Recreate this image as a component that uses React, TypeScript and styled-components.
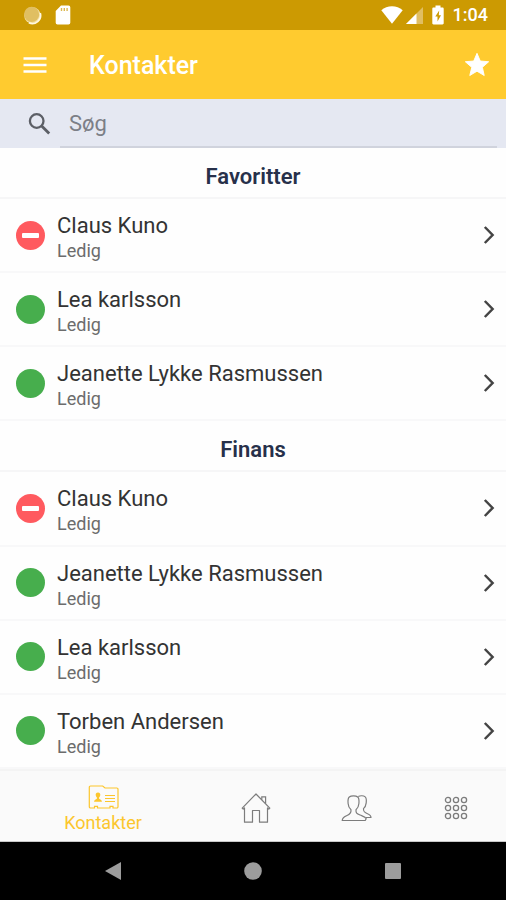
import React from "react";
import styled, { createGlobalStyle } from "styled-components";

const GlobalStyle = createGlobalStyle`
  *, *::before, *::after { box-sizing: border-box; }
  body {
    margin: 0;
    background: #fff;
    font-family: Roboto, sans-serif;
    color: #212121;
  }
  button, input { font-family: inherit; }
  svg { display: block; }
`;

const Screen = styled.div`
  display: flex;
  flex-direction: column;
  min-height: 100vh;
  background: #fefefe;
`;

const StatusBar = styled.div`
  display: flex;
  align-items: center;
  justify-content: space-between;
  height: 30px;
  padding: 0 18px 0 22px;
  background: #cc9a02;
  color: #fff;
`;

const StatusGroup = styled.div<{ $gap: number }>`
  display: flex;
  align-items: center;
  gap: ${(p) => p.$gap}px;
`;

const Clock = styled.time`
  font-size: 18px;
  line-height: 30px;
  font-weight: 500;
`;

const AppBar = styled.header`
  display: flex;
  align-items: center;
  height: 69px;
  padding: 0 12px 0 18px;
  background: #ffcb2f;
  color: #fff;
`;

const IconButton = styled.button`
  display: flex;
  align-items: center;
  justify-content: center;
  width: 34px;
  height: 34px;
  padding: 0;
  border: 0;
  background: none;
  color: inherit;
  cursor: pointer;
`;

const Title = styled.h1`
  flex: 1;
  margin: 0;
  padding: 2px 0 0 37px;
  font-size: 25px;
  line-height: 32px;
  font-weight: 500;
`;

const SearchBar = styled.label`
  display: flex;
  align-items: stretch;
  height: 49px;
  padding: 0 9px 0 27px;
  background: #e5e8f2;
  color: #5c5f66;
`;

const SearchIcon = styled.span`
  display: flex;
  align-items: center;
  width: 33px;
`;

const SearchInput = styled.input`
  flex: 1;
  min-width: 0;
  padding: 2px 9px 0;
  border: 0;
  border-bottom: 2px solid #d0d3dd;
  outline: 0;
  background: none;
  color: #212121;
  font-size: 22px;
  &::placeholder { color: #7c7f87; opacity: 1; }
`;

const Contacts = styled.main`
  display: flex;
  flex: 1;
  flex-direction: column;
`;

const Group = styled.section`
  display: contents;
`;

const GroupTitle = styled.h2`
  margin: 0;
  padding: 15px 16px 7px;
  border-bottom: 2px solid #f6f6f7;
  color: #27304a;
  font-size: 22px;
  line-height: 27px;
  font-weight: 600;
  text-align: center;
`;

const List = styled.ul`
  display: contents;
  list-style: none;
`;

const Item = styled.li`
  display: flex;
  flex: 1 0 auto;
  min-height: 74px;
  border-bottom: 2px solid #f8f8f9;
`;

const Row = styled.button`
  display: flex;
  flex: 1;
  align-items: center;
  min-width: 0;
  padding: 0 10px 0 16px;
  border: 0;
  background: none;
  color: #444;
  text-align: left;
  cursor: pointer;
`;

const Presence = styled.span<{ $busy: boolean }>`
  display: flex;
  flex: none;
  align-items: center;
  justify-content: center;
  width: 29px;
  height: 29px;
  border-radius: 50%;
  background: ${(p) => (p.$busy ? "#ff5a5f" : "#47ae4d")};
  &::before {
    content: "";
    display: ${(p) => (p.$busy ? "block" : "none")};
    width: 17px;
    height: 5px;
    border-radius: 1px;
    background: #fff;
  }
`;

const Person = styled.span`
  display: flex;
  flex: 1;
  flex-direction: column;
  min-width: 0;
  padding: 5px 0 0 12px;
`;

const Name = styled.span`
  color: #333;
  font-size: 22px;
  line-height: 27px;
`;

const State = styled.span`
  color: #6c6c6c;
  font-size: 18px;
  line-height: 24px;
`;

const TabBar = styled.nav`
  display: flex;
  height: 73px;
  border-top: 2px solid #f4f4f4;
  border-bottom: 1px solid #c8c8c8;
  background: #fafafa;
`;

const Tab = styled.button<{ $active?: boolean }>`
  display: flex;
  flex: ${(p) => (p.$active ? "1" : "0 0 100px")};
  flex-direction: column;
  align-items: center;
  justify-content: center;
  gap: 2px;
  min-width: 0;
  padding: ${(p) => (p.$active ? "8px" : "3px")} 0 0;
  border: 0;
  background: none;
  color: ${(p) => (p.$active ? "#fcc62d" : "#7c7c7c")};
  font-size: 18px;
  line-height: 24px;
  cursor: pointer;
`;

const SystemBar = styled.div`
  display: flex;
  justify-content: center;
  height: 58px;
  background: #000;
  color: #9c9c9c;
`;

const SystemButton = styled.button`
  display: flex;
  flex: 0 1 140px;
  align-items: center;
  justify-content: center;
  padding: 0;
  border: 0;
  background: none;
  color: inherit;
  cursor: pointer;
`;

type Contact = { name: string; state: string; busy?: boolean };

const groups: { title: string; contacts: Contact[] }[] = [
  {
    title: "Favoritter",
    contacts: [
      { name: "Claus Kuno", state: "Ledig", busy: true },
      { name: "Lea karlsson", state: "Ledig" },
      { name: "Jeanette Lykke Rasmussen", state: "Ledig" },
    ],
  },
  {
    title: "Finans",
    contacts: [
      { name: "Claus Kuno", state: "Ledig", busy: true },
      { name: "Jeanette Lykke Rasmussen", state: "Ledig" },
      { name: "Lea karlsson", state: "Ledig" },
      { name: "Torben Andersen", state: "Ledig" },
    ],
  },
];

const SyncIcon = () => (
  <svg width="20" height="20" viewBox="0 0 20 20" aria-hidden="true">
    <circle cx="10.5" cy="10.5" r="8.3" fill="#f3dfa3" />
    <circle cx="9.6" cy="9.4" r="7.6" fill="#e0bf62" />
    <path d="M18.3 8a8.3 8.3 0 0 1-11.5 9.8" fill="none" stroke="#fff8e2" strokeWidth="1.6" />
  </svg>
);

const CardIcon = () => (
  <svg width="16" height="20" viewBox="0 0 16 20" aria-hidden="true">
    <path
      d="M6 .5h7.5A1.8 1.8 0 0 1 15.3 2.3v15.4a1.8 1.8 0 0 1-1.8 1.8h-11A1.8 1.8 0 0 1 .7 17.7V6z"
      fill="#fff"
    />
    <path d="M6.5 3v3M9.3 3v3M12.1 3v3" stroke="#dcb850" strokeWidth="1.4" />
  </svg>
);

const WifiIcon = () => (
  <svg width="22" height="18" viewBox="0 0 22 18" aria-hidden="true">
    <path d="M11 17.7.3 4.2C3.3 1.7 7 .3 11 .3s7.7 1.4 10.7 3.9z" fill="#fff" />
  </svg>
);

const SignalIcon = () => (
  <svg width="17" height="17" viewBox="0 0 17 17" aria-hidden="true">
    <path d="M0 17 17 0v17z" fill="#e0be62" />
    <path d="M0 17 10.5 6.5V17z" fill="#fff" />
  </svg>
);

const BatteryIcon = () => (
  <svg width="12" height="20" viewBox="0 0 12 20" aria-hidden="true">
    <path
      d="M3.5 .5h5v2h2c.7 0 1.2.5 1.2 1.2v14.6c0 .7-.5 1.2-1.2 1.2h-9c-.7 0-1.2-.5-1.2-1.2V3.7c0-.7.5-1.2 1.2-1.2h2z"
      fill="#fff"
    />
    <path d="M7.2 5.5 3.3 11.5h2.2V16.5l3.5-6.2H6.8z" fill="#cc9a02" />
  </svg>
);

const MenuIcon = () => (
  <svg width="24" height="18" viewBox="0 0 24 18" aria-hidden="true">
    <path d="M.5 2.5h23M.5 9h23M.5 15.5h23" stroke="currentColor" strokeWidth="2.6" />
  </svg>
);

const StarIcon = () => (
  <svg width="28" height="28" viewBox="0 0 24 24" aria-hidden="true">
    <path
      d="M12 17.3 18.2 21l-1.6-7L22 9.2l-7.2-.6L12 2 9.2 8.6 2 9.2 7.5 14l-1.7 7z"
      fill="currentColor"
      stroke="currentColor"
      strokeLinejoin="round"
      strokeWidth=".8"
    />
  </svg>
);

const MagnifierIcon = () => (
  <svg width="24" height="24" viewBox="0 0 24 24" aria-hidden="true">
    <circle cx="9.7" cy="9" r="6.8" fill="none" stroke="currentColor" strokeWidth="2.3" />
    <path d="m14.7 14 7.5 7.5" stroke="currentColor" strokeWidth="2.8" />
  </svg>
);

const ChevronIcon = () => (
  <svg width="14" height="20" viewBox="0 0 14 20" aria-hidden="true">
    <path d="m2.8 2 7.8 8-7.8 8" fill="none" stroke="currentColor" strokeWidth="2.5" />
  </svg>
);

const FolderIcon = () => (
  <svg width="31" height="24" viewBox="0 0 31 24" fill="none" stroke="currentColor" aria-hidden="true">
    <path
      d="M2.5 1h12.2l2.3 2h11.8a1.2 1.2 0 0 1 1.2 1.2v17.6a1.2 1.2 0 0 1-1.2 1.2H25v-1.7h-3V23H9.5v-1.7h-3V23h-4a1.2 1.2 0 0 1-1.2-1.2V2.2A1.2 1.2 0 0 1 2.5 1z"
      strokeWidth="1.2"
    />
    <path d="M17 10.5h10M17 13.5h10M17 16.5h10" strokeWidth="1" />
    <path
      d="M10 7.5c1.7 0 2.4 1.1 2.3 2.6-.1 1.3-.7 2-1.2 2.5v1.1c1 .6 2.6.8 2.9 3H6c.3-2.2 1.9-2.4 2.9-3v-1.1c-.5-.5-1.1-1.2-1.2-2.5-.1-1.5.6-2.6 2.3-2.6z"
      fill="currentColor"
      stroke="none"
    />
  </svg>
);

const HouseIcon = () => (
  <svg width="30" height="32" viewBox="0 0 30 32" fill="none" stroke="currentColor" strokeWidth="1.2" aria-hidden="true">
    <path d="M1.2 16.2 15 2l13.8 14.2-1 1-1.3-1.3v14.3h-8V18.5h-7v11.7h-8V15.9l-1.3 1.3z" strokeLinejoin="round" />
    <path d="M20.8 7.7V4.8h3.8v6.8" />
  </svg>
);

const PeopleIcon = () => (
  <svg width="31" height="28" viewBox="0 0 31 28" fill="none" stroke="currentColor" strokeWidth="1.2" strokeLinejoin="round" aria-hidden="true">
    <path d="M8.3 3C10.2 1.4 14.800 1.4 16.7 3c1.5 1.300 1.5 3.500 1.2 6.500-.2 3-1.400 5-2.900 6.200-.3 3.200.8 4 4 5.300 3.500 1.500 5.500 1.800 6.200 3.800l-1 1.700H1.200c.2-2.800 1.800-3.800 4.800-5 3.200-1.300 4.300-2.600 4-5.800-1.500-1.200-2.700-3.200-2.900-6.200-.3-3-.3-5.200 1.200-6.500z" />
    <path d="M17.3 2.600c1.800-1.200 5.200-1.200 6.900.3 1.400 1.200 1.300 3.300 1 6-.3 2.800-1.300 4.500-2.700 5.700-.2 2.900.6 3.700 3.500 4.900 2.500 1 4 1.700 4 4h-5" />
  </svg>
);

const dots = [0, 1, 2].flatMap((r) => [0, 1, 2].map((c) => ({ x: 4 + c * 8, y: 4 + r * 8 })));

const GridIcon = () => (
  <svg width="24" height="24" viewBox="0 0 24 24" fill="none" stroke="currentColor" strokeWidth="1.3" aria-hidden="true">
    {dots.map((d) => (
      <circle key={`${d.x}-${d.y}`} cx={d.x} cy={d.y} r="2.6" />
    ))}
  </svg>
);

export default function App() {
  return (
    <Screen>
      <GlobalStyle />
      <StatusBar>
        <StatusGroup $gap={13}>
          <SyncIcon />
          <CardIcon />
        </StatusGroup>
        <StatusGroup $gap={9}>
          <StatusGroup $gap={3}>
            <WifiIcon />
            <SignalIcon />
          </StatusGroup>
          <BatteryIcon />
          <Clock dateTime="01:04">1:04</Clock>
        </StatusGroup>
      </StatusBar>
      <AppBar>
        <IconButton type="button" aria-label="Menu">
          <MenuIcon />
        </IconButton>
        <Title>Kontakter</Title>
        <IconButton type="button" aria-label="Favoritter">
          <StarIcon />
        </IconButton>
      </AppBar>
      <SearchBar>
        <SearchIcon>
          <MagnifierIcon />
        </SearchIcon>
        <SearchInput type="search" placeholder="Søg" aria-label="Søg" />
      </SearchBar>
      <Contacts>
        {groups.map((group) => (
          <Group key={group.title} aria-label={group.title}>
            <GroupTitle>{group.title}</GroupTitle>
            <List>
              {group.contacts.map((contact) => (
                <Item key={contact.name}>
                  <Row type="button">
                    <Presence $busy={Boolean(contact.busy)} />
                    <Person>
                      <Name>{contact.name}</Name>
                      <State>{contact.state}</State>
                    </Person>
                    <ChevronIcon />
                  </Row>
                </Item>
              ))}
            </List>
          </Group>
        ))}
      </Contacts>
      <TabBar>
        <Tab type="button" $active aria-current="page">
          <FolderIcon />
          Kontakter
        </Tab>
        <Tab type="button" aria-label="Hjem">
          <HouseIcon />
        </Tab>
        <Tab type="button" aria-label="Grupper">
          <PeopleIcon />
        </Tab>
        <Tab type="button" aria-label="Mere">
          <GridIcon />
        </Tab>
      </TabBar>
      <SystemBar>
        <SystemButton type="button" aria-label="Tilbage">
          <svg width="16" height="18" viewBox="0 0 16 18" aria-hidden="true">
            <path d="M0 9 16 0v18z" fill="currentColor" />
          </svg>
        </SystemButton>
        <SystemButton type="button" aria-label="Startskærm">
          <svg width="18" height="18" viewBox="0 0 18 18" aria-hidden="true">
            <circle cx="9" cy="9" r="8.8" fill="currentColor" />
          </svg>
        </SystemButton>
        <SystemButton type="button" aria-label="Seneste">
          <svg width="16" height="16" viewBox="0 0 16 16" aria-hidden="true">
            <rect width="16" height="16" rx="1" fill="currentColor" />
          </svg>
        </SystemButton>
      </SystemBar>
    </Screen>
  );
}
